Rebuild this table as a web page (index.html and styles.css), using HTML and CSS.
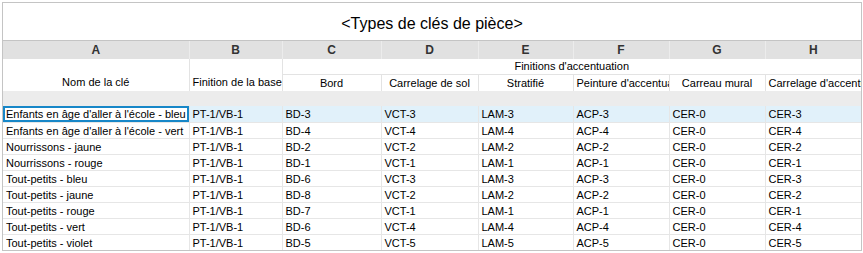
FILE: index.html
```html
<!DOCTYPE html>
<html lang="fr">
<head>
<meta charset="utf-8">
<link rel="stylesheet" href="styles.css">
</head>
<body>
<div class="sheet">
  <div class="title">&lt;Types de clés de pièce&gt;</div>
  <table class="grid">
    <colgroup>
      <col class="ca"><col class="cb"><col class="cc"><col class="cd"><col class="ce"><col class="cf"><col class="cg"><col class="ch">
    </colgroup>
    <tr class="letters">
      <td>A</td><td>B</td><td>C</td><td>D</td><td>E</td><td>F</td><td>G</td><td>H</td>
    </tr>
    <tr class="head1">
      <td rowspan="2" class="hb">Nom de la clé</td>
      <td rowspan="2" class="hb">Finition de la base</td>
      <td colspan="6" class="group">Finitions d'accentuation</td>
    </tr>
    <tr class="head2">
      <td>Bord</td><td>Carrelage de sol</td><td>Stratifié</td><td class="clip">Peinture d'accentuation</td><td>Carreau mural</td><td class="clip">Carrelage d'accentuation</td>
    </tr>
    <tr class="spacer"><td colspan="8"></td></tr>
    <tr class="row sel">
      <td class="active">Enfants en âge d'aller à l'école - bleu</td><td>PT-1/VB-1</td><td>BD-3</td><td>VCT-3</td><td>LAM-3</td><td>ACP-3</td><td>CER-0</td><td>CER-3</td>
    </tr>
    <tr class="row">
      <td>Enfants en âge d'aller à l'école - vert</td><td>PT-1/VB-1</td><td>BD-4</td><td>VCT-4</td><td>LAM-4</td><td>ACP-4</td><td>CER-0</td><td>CER-4</td>
    </tr>
    <tr class="row">
      <td>Nourrissons - jaune</td><td>PT-1/VB-1</td><td>BD-2</td><td>VCT-2</td><td>LAM-2</td><td>ACP-2</td><td>CER-0</td><td>CER-2</td>
    </tr>
    <tr class="row">
      <td>Nourrissons - rouge</td><td>PT-1/VB-1</td><td>BD-1</td><td>VCT-1</td><td>LAM-1</td><td>ACP-1</td><td>CER-0</td><td>CER-1</td>
    </tr>
    <tr class="row">
      <td>Tout-petits - bleu</td><td>PT-1/VB-1</td><td>BD-6</td><td>VCT-3</td><td>LAM-3</td><td>ACP-3</td><td>CER-0</td><td>CER-3</td>
    </tr>
    <tr class="row">
      <td>Tout-petits - jaune</td><td>PT-1/VB-1</td><td>BD-8</td><td>VCT-2</td><td>LAM-2</td><td>ACP-2</td><td>CER-0</td><td>CER-2</td>
    </tr>
    <tr class="row">
      <td>Tout-petits - rouge</td><td>PT-1/VB-1</td><td>BD-7</td><td>VCT-1</td><td>LAM-1</td><td>ACP-1</td><td>CER-0</td><td>CER-1</td>
    </tr>
    <tr class="row">
      <td>Tout-petits - vert</td><td>PT-1/VB-1</td><td>BD-6</td><td>VCT-4</td><td>LAM-4</td><td>ACP-4</td><td>CER-0</td><td>CER-4</td>
    </tr>
    <tr class="row">
      <td>Tout-petits - violet</td><td>PT-1/VB-1</td><td>BD-5</td><td>VCT-5</td><td>LAM-5</td><td>ACP-5</td><td>CER-0</td><td>CER-5</td>
    </tr>
  </table>
</div>
</body>
</html>
```

FILE: styles.css
```css
html, body {
  margin: 0;
  padding: 0;
  background: #ffffff;
}
body {
  padding: 2px 0 0 2px;
  font-family: "Liberation Sans", Arial, sans-serif;
  font-size: 11px;
  color: #000;
}
.sheet {
  width: 858px;
  border: 1px solid #c4c4c4;
  background: #fff;
}
.title {
  height: 38px;
  display: flex;
  align-items: center;
  justify-content: center;
  font-size: 16px;
  border-bottom: 1px solid #c4c4c4;
  box-sizing: border-box;
  padding-top: 5px;
}
.grid {
  width: 858px;
  table-layout: fixed;
  border-collapse: collapse;
}
.ca { width: 186px; }
.cb { width: 93px; }
.cc { width: 99px; }
.cd { width: 97px; }
.ce { width: 95px; }
.cf { width: 96px; }
.cg { width: 96px; }
.ch { width: 96px; }

.grid td {
  padding: 0 3px;
  white-space: nowrap;
  overflow: hidden;
  line-height: 13px;
}
.letters td {
  height: 18px;
  background: #e1e1e1;
  border-left: 1px solid #ececec;
  text-align: center;
  font-weight: bold;
  font-size: 12px;
  color: #333;
  padding: 0;
}
.letters td:first-child { border-left: none; }
.head1 td, .head2 td {
  text-align: center;
  background: #fff;
  border-left: 1px solid #e3e3e3;
}
.head1 td:first-child { border-left: none; }
.head1 td { height: 15px; }
.head2 td {
  height: 16px;
  border-top: 1px solid #e3e3e3;
}
.hb {
  vertical-align: bottom;
  padding-bottom: 2px !important;
}
.group { vertical-align: middle; }
.clip { text-align: left; }
.spacer td {
  height: 15px;
  background: #ececec;
  padding: 0;
}
.row td {
  height: 14px;
  border-left: 1px solid #e6e6e6;
  border-top: 1px solid #e6e6e6;
  padding: 1px 3px 0;
  vertical-align: middle;
}
.row td:first-child { border-left: none; }
.row.sel td { background: #e1f1fa; border-top: none; height: 15px; }
.row td.active {
  background: #fff;
  box-shadow: inset 0 0 0 2px #1787c8;
}
```
